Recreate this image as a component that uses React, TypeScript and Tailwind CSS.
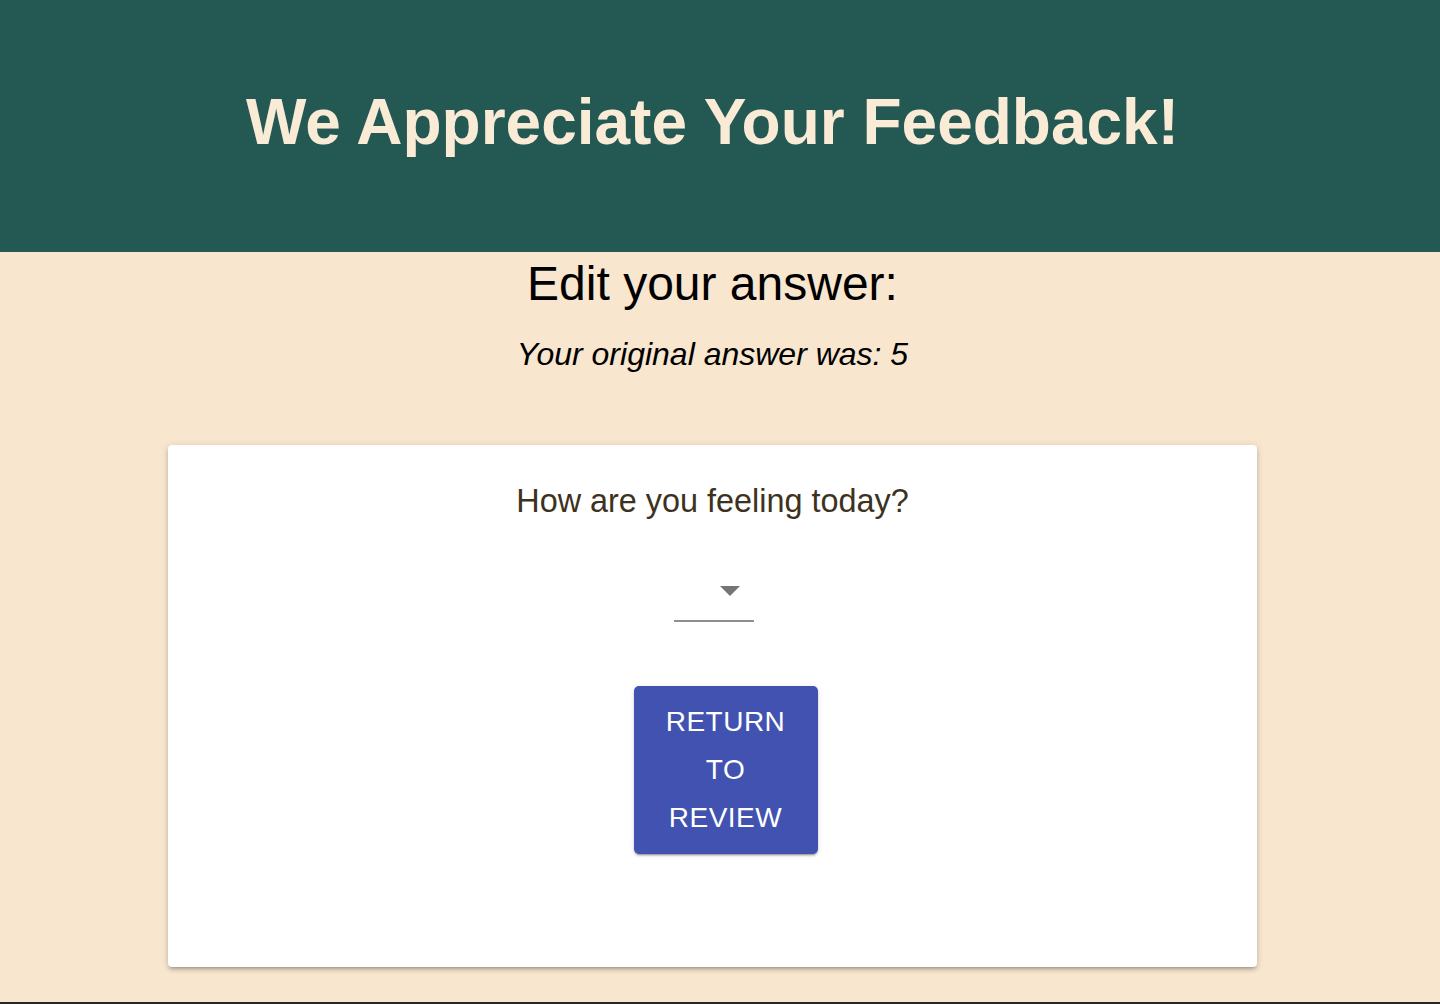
const App = () => {
  return (
    <div className="min-h-[1004px] flex flex-col bg-[#f8e6cf] font-['Liberation_Sans',Arial,sans-serif]">
      {/* Header */}
      <header className="h-[252px] bg-[#245853] pt-[90px] pr-[15px]">
        <h1 className="text-center text-[64px] leading-[64px] font-bold text-[#faebd7]">
          We Appreciate Your Feedback!
        </h1>
      </header>

      {/* Content */}
      <main className="flex-1 w-[1425px] flex flex-col items-center">
        <h2 className="mt-[8px] text-[48px] leading-[48px] text-black">Edit your answer:</h2>
        <p className="mt-[30px] text-[32px] leading-[32px] italic text-black">Your original answer was: 5</p>

        <div className="mt-[75px] w-[1089px] h-[522px] bg-white rounded-[4px] shadow-[0_3px_3px_-2px_rgba(0,0,0,0.2),0_3px_4px_0_rgba(0,0,0,0.14),0_1px_8px_0_rgba(0,0,0,0.12)] flex flex-col items-center pt-[40px]">
          <p className="text-[32.4px] leading-[32px] text-[#3d3220]">How are you feeling today?</p>

          {/* Select */}
          <div className="relative mt-[43px] ml-[2px] w-[80px] h-[62px] border-b-2 border-[#8f8f8f]">
            <svg className="absolute right-0 top-[6px] w-[48px] h-[48px] text-[#757575]" viewBox="0 0 24 24" fill="currentColor">
              <path d="M7 10l5 5 5-5z" />
            </svg>
          </div>

          <button className="mt-[64px] ml-[26px] w-[184px] h-[168px] rounded-[5px] bg-[#4152b0] text-white text-[28px] leading-[48px] tracking-[0.5px] px-[16px] py-[12px] shadow-[0_3px_1px_-2px_rgba(0,0,0,0.2),0_2px_2px_0_rgba(0,0,0,0.14),0_1px_5px_0_rgba(0,0,0,0.12)]">
            RETURN TO REVIEW
          </button>
        </div>
      </main>

      <div className="h-[2px] bg-[#27272a]" />
    </div>
  )
}

export default App
